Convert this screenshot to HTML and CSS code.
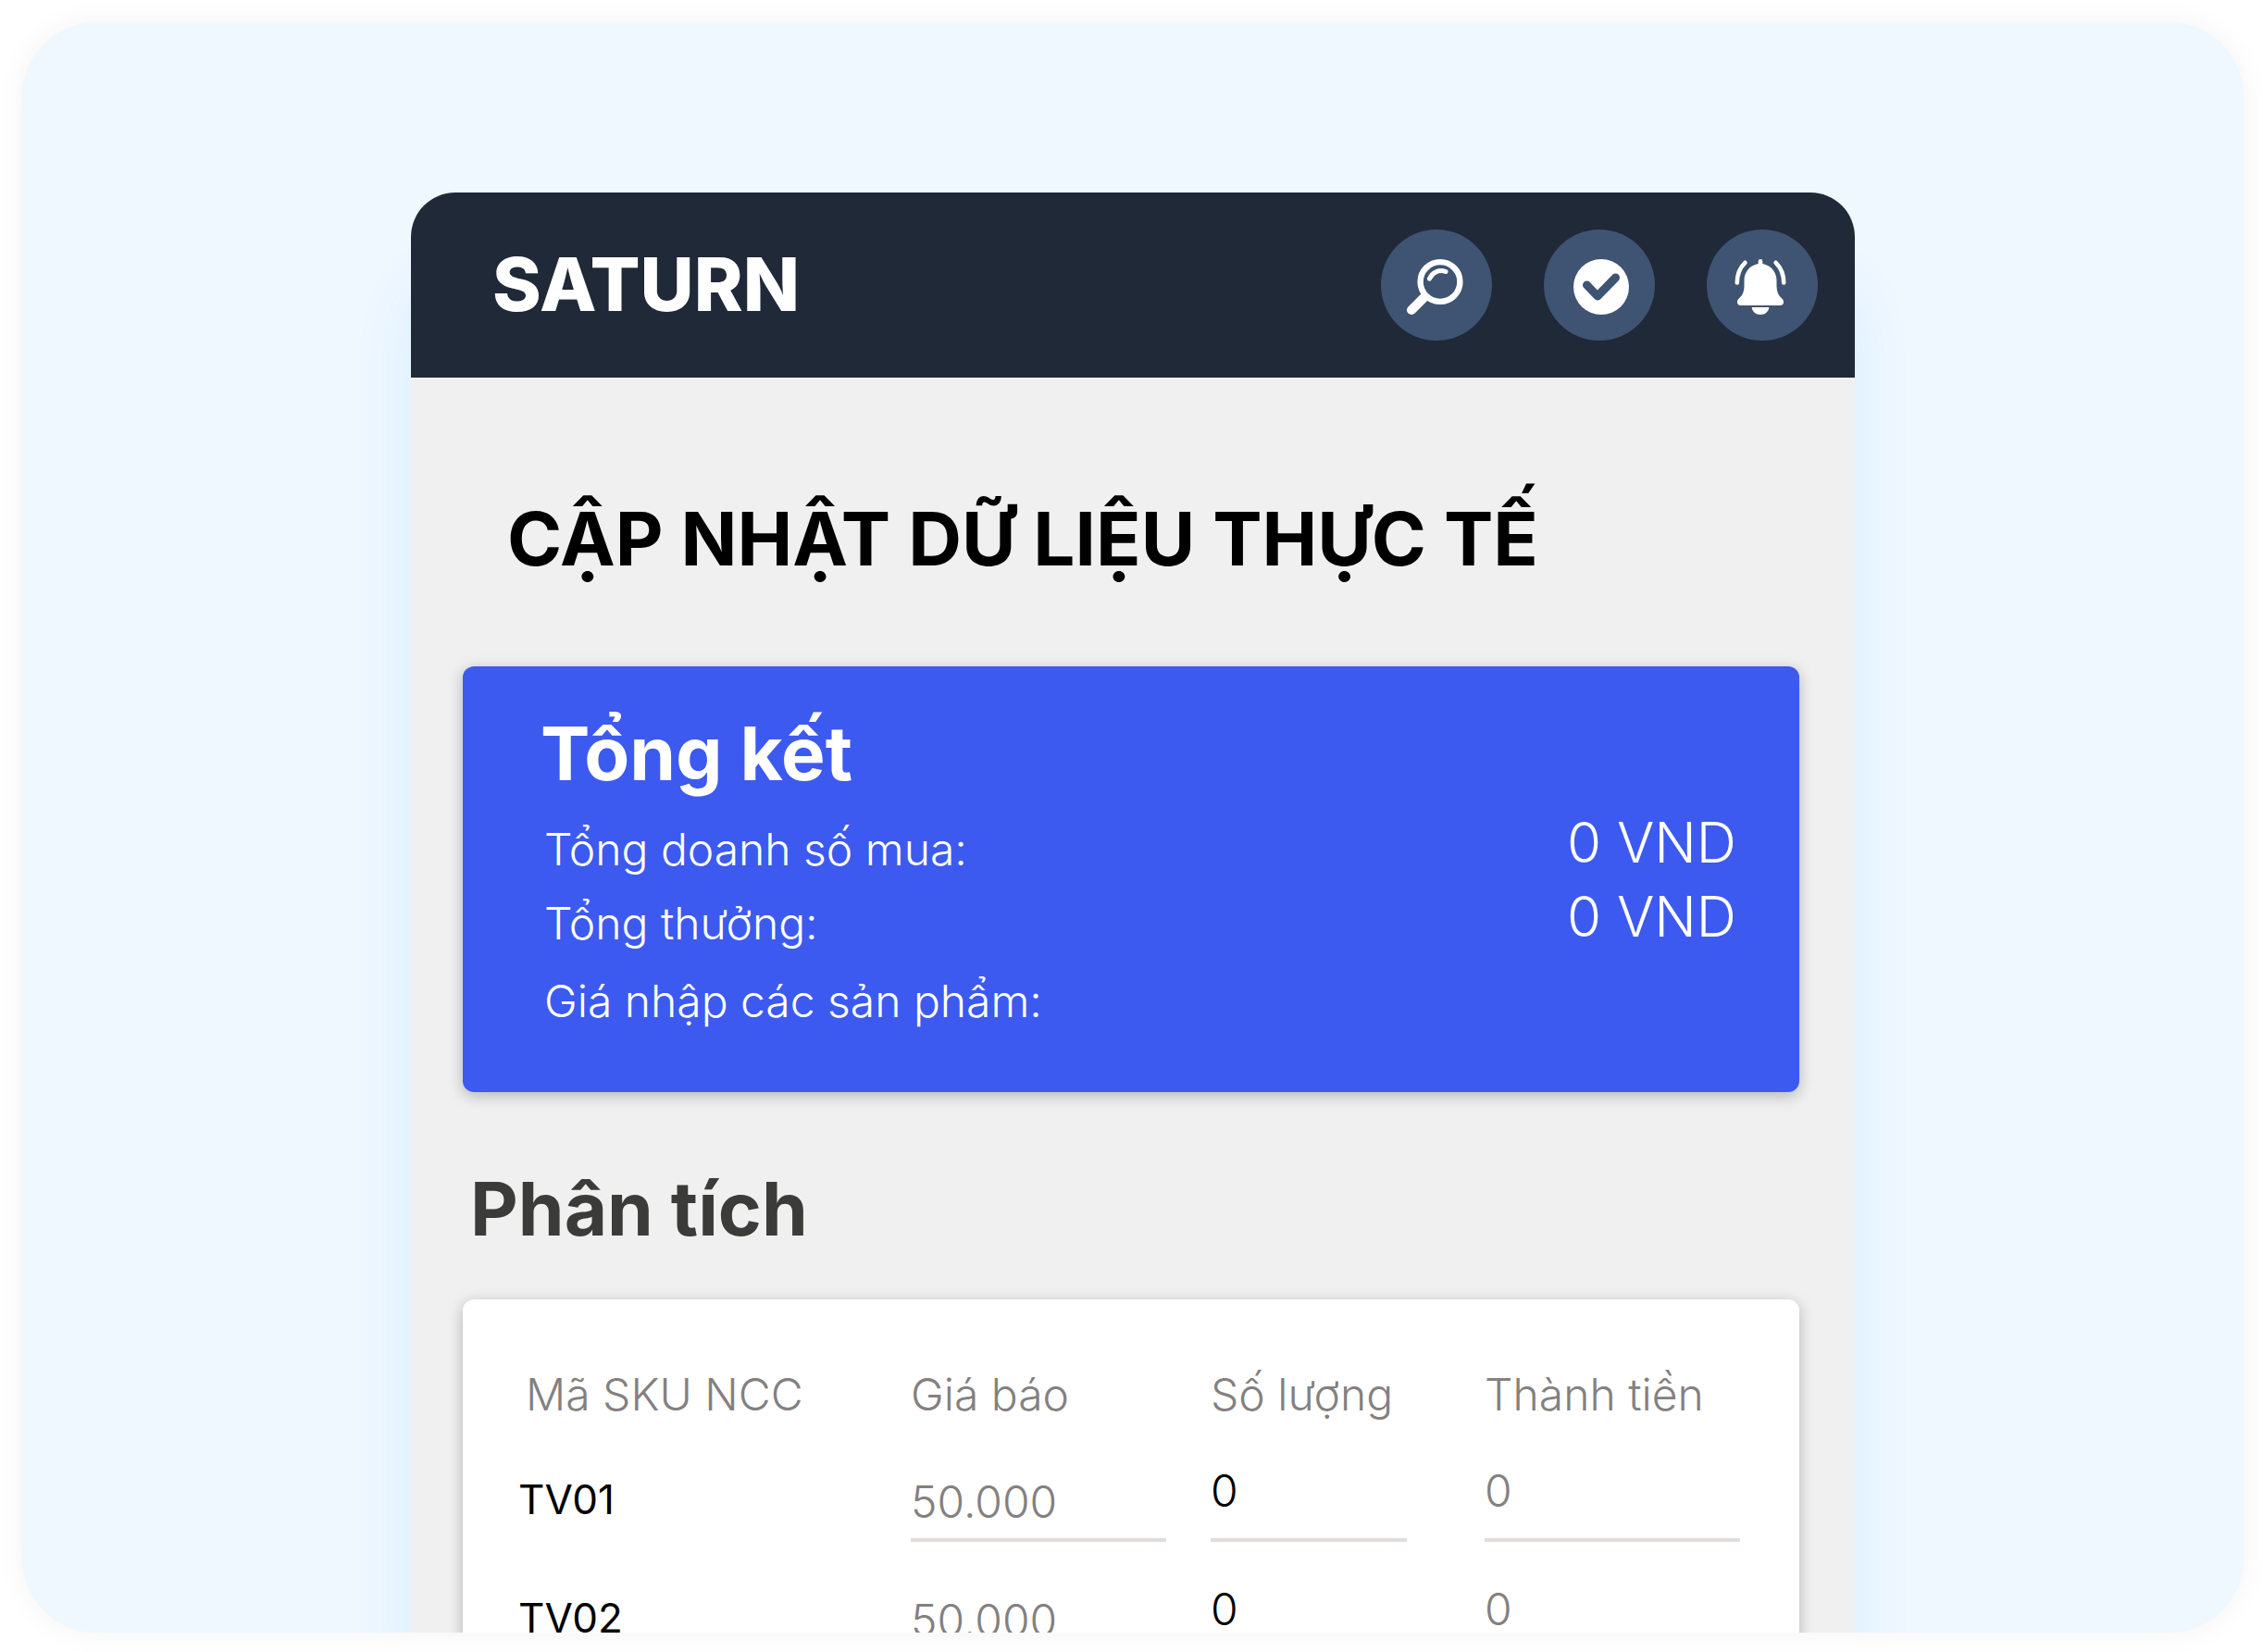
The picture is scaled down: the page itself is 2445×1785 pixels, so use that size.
FILE: index.html
```html
<!DOCTYPE html>
<html lang="vi">
<head>
    <meta charset="UTF-8">
    <meta name="viewport" content="width=device-width, initial-scale=1.0">
    <title>Saturn</title>
    <link rel="stylesheet" href="styles.css">
</head>
<body>

<div class="frame">
    <div class="phone">
        <header class="topbar">
            <div class="brand">SATURN</div>
            <nav class="actions">
                <button class="btn-icon" aria-label="Tìm kiếm">
                    <svg viewBox="0 0 120 120" fill="none" stroke="#fff" stroke-linecap="round">
                        <circle cx="64" cy="56.5" r="21.4" stroke-width="6.4"/>
                        <path d="M46.5 73.5L33 87" stroke-width="10"/>
                        <path d="M52.5 53.2A13.5 13.5 0 0 1 70 45.5" stroke-width="5"/>
                    </svg>
                </button>
                <button class="btn-icon" aria-label="Hoàn thành">
                    <svg viewBox="0 0 120 120" fill="none">
                        <circle cx="62" cy="62" r="30" fill="#fff"/>
                        <path d="M46.5 60L58 72L77.5 52" stroke="#3f5373" stroke-width="9" stroke-linecap="round" stroke-linejoin="round"/>
                    </svg>
                </button>
                <button class="btn-icon" aria-label="Thông báo">
                    <svg viewBox="0 0 120 120" fill="#fff">
                        <path d="M58 37C48 37 40.5 45 40.5 55V61C40.5 67 38.5 71.5 34.8 74.6C33.5 75.8 33 77 33 78.5C33 80.5 34.5 82 36.5 82H79.5C81.5 82 83 80.5 83 78.5C83 77 82.5 75.8 81.2 74.6C77.5 71.5 75.5 67 75.5 61V55C75.5 45 68 37 58 37Z"/>
                        <path d="M48.7 84H67.3C67 88.5 63 92 58 92C53 92 49 88.5 48.7 84Z"/>
                        <path d="M58 34.3V40M32.8 57.5C32.8 48.5 36 41 41.4 35.8M83.2 57.5C83.2 48.5 80 41 74.6 35.8" fill="none" stroke="#fff" stroke-width="4.6" stroke-linecap="round"/>
                    </svg>
                </button>
            </nav>
        </header>

        <main>
            <h1>CẬP NHẬT DỮ LIỆU THỰC TẾ</h1>

            <section class="card summary">
                <h2>Tổng kết</h2>
                <dl>
                    <div><dt>Tổng doanh số mua:</dt><dd>0 VND</dd></div>
                    <div><dt>Tổng thưởng:</dt><dd>0 VND</dd></div>
                    <div><dt>Giá nhập các sản phẩm:</dt></div>
                </dl>
            </section>

            <h2 class="section-title">Phân tích</h2>

            <section class="card analysis">
                <table>
                    <colgroup>
                        <col class="col-sku"><col class="col-price"><col class="col-qty"><col>
                    </colgroup>
                    <thead>
                        <tr>
                            <th>Mã SKU NCC</th>
                            <th id="price">Giá báo</th>
                            <th id="qty">Số lượng</th>
                            <th id="total">Thành tiền</th>
                        </tr>
                    </thead>
                    <tbody>
                        <tr>
                            <td class="sku">TV01</td>
                            <td><input class="price" type="text" aria-labelledby="price" value="50.000"></td>
                            <td><input class="qty" type="text" aria-labelledby="qty" value="0"></td>
                            <td><input class="total" type="text" aria-labelledby="total" value="0"></td>
                        </tr>
                        <tr>
                            <td class="sku">TV02</td>
                            <td><input class="price" type="text" aria-labelledby="price" value="50.000"></td>
                            <td><input class="qty" type="text" aria-labelledby="qty" value="0"></td>
                            <td><input class="total" type="text" aria-labelledby="total" value="0"></td>
                        </tr>
                    </tbody>
                </table>
            </section>
        </main>
    </div>
</div>

</body>
</html>
```

FILE: styles.css
```css
* { box-sizing: border-box; margin: 0; padding: 0; }
body { height: 100vh; padding: 24px 21px 21px 24px; background: #fff; color: #000; font-family: Inter, sans-serif; overflow: hidden; }

.frame { height: 100%; padding-top: 184px; overflow: hidden; border-radius: 80px; background: #eff7ff; box-shadow: 0 0 32px rgba(0,0,0,0.05); }
.phone { width: 65%; min-height: 100%; margin: 0 auto; border-radius: 48px 48px 0 0; background: #f0f0f0; box-shadow: 0 96px 64px rgba(0,170,255,0.1); }

/* Header */
.topbar { display: flex; align-items: center; justify-content: space-between; height: 200px; padding: 0 40px 0 88px; border-radius: 48px 48px 0 0; background: #202937; }
.brand { padding-bottom: 2px; color: #fff; font-size: 80px; line-height: 96px; font-weight: 800; }
.actions { display: flex; gap: 56px; }
.btn-icon { width: 120px; height: 120px; border: none; border-radius: 50%; background: #3f5373; cursor: pointer; }
.btn-icon svg { display: block; width: 100%; height: 100%; }

main { padding: 126px 60px 0 56px; }
h1 { padding-left: 48px; font-size: 80px; line-height: 96px; font-weight: 700; }
h2 { font-size: 80px; line-height: 96px; font-weight: 700; }
.card { border-radius: 12px; box-shadow: 0 4px 16px rgba(0,0,0,0.25); }

/* Summary */
.summary { height: 460px; margin-top: 90px; padding: 46px 68px 0 84px; background: #3c5af0; color: #fff; }
.summary dl { margin-top: 16px; }
.summary dl div { display: flex; align-items: flex-start; justify-content: space-between; height: 80px; font-weight: 300; }
.summary dl div:last-child { margin-top: 4px; }
.summary dt { padding-left: 4px; font-size: 48px; line-height: 80px; }
.summary dd { font-size: 60px; line-height: 64px; }

/* Analysis */
.section-title { margin: 78px 0 50px; padding-left: 8px; color: #3b3b3a; }
.analysis { padding: 64px 64px 64px 60px; background: #fff; }
table { width: 100%; table-layout: fixed; border-collapse: collapse; }
.col-sku { width: 424px; }
.col-price { width: 324px; }
.col-qty { width: 296px; }
th { height: 80px; padding-bottom: 4px; color: #848080; font-size: 48px; font-weight: 300; text-align: left; }
th:first-child { padding-left: 8px; }
td { height: 128px; font-size: 44px; }
.sku { padding-top: 16px; }
input { display: block; height: 108px; border: none; border-bottom: 4px solid #e2dcdd; background: none; color: #848080; font-family: inherit; font-size: 48px; font-weight: 300; }
.price { width: 276px; padding-top: 24px; }
.qty { width: 212px; color: #000; }
.total { width: 276px; }
```
